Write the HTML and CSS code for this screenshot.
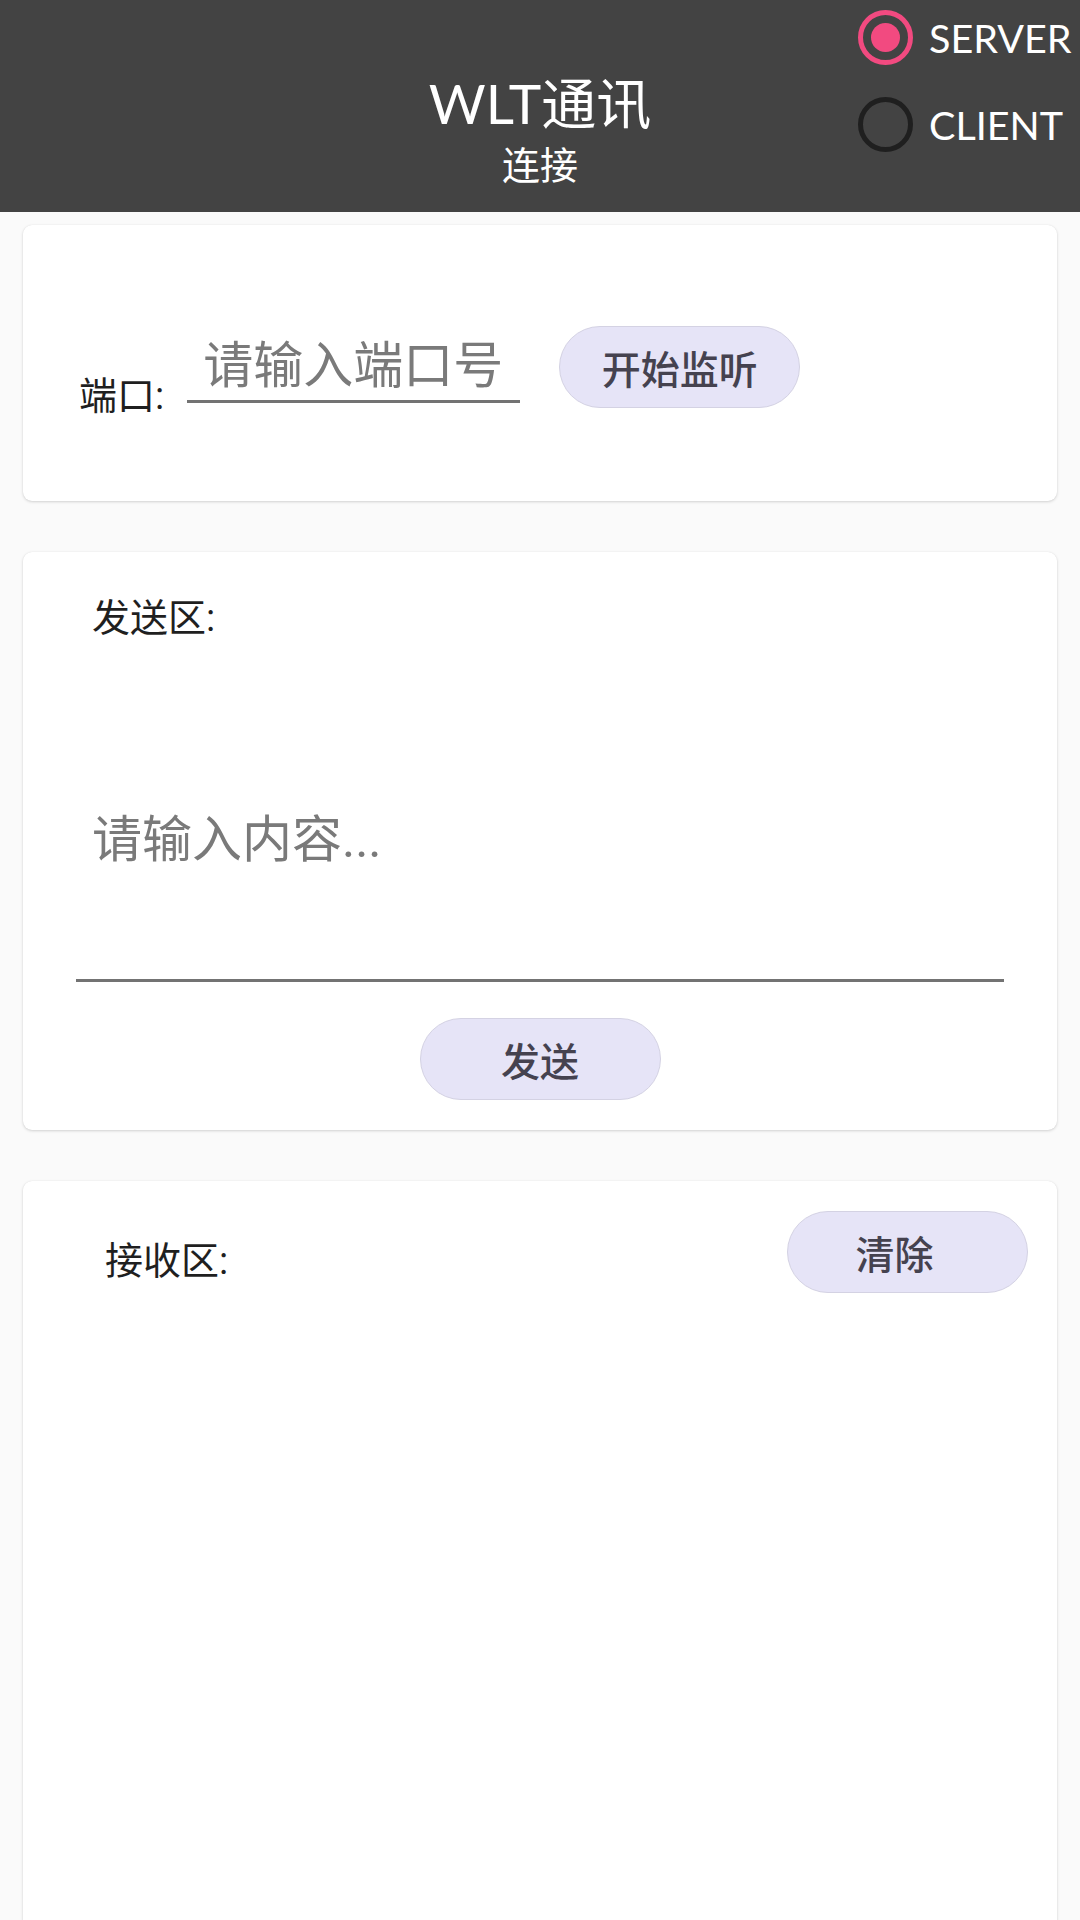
FILE: index.html
```html
<!DOCTYPE html>
<html lang="zh-CN">
<head>
  <meta charset="UTF-8" />
  <title>WLT通讯</title>
  <link rel="stylesheet" href="styles.css">
</head>
<body>

<div class="toolbar">
  <div class="title-block">
    <div class="title">WLT通讯</div>
    <div class="subtitle">连接</div>
  </div>
  <div class="mode-group">
    <label class="mode-item">
      <span class="radio checked"></span>
      <span class="mode-text">SERVER</span>
    </label>
    <label class="mode-item">
      <span class="radio"></span>
      <span class="mode-text">CLIENT</span>
    </label>
  </div>
</div>

<div class="content">
  <div class="card port-card">
    <span class="label port-label">端口:</span>
    <input class="port-input" type="text" placeholder="请输入端口号">
    <button class="pill-btn listen-btn">开始监听</button>
  </div>

  <div class="card send-card">
    <div class="label send-label">发送区:</div>
    <input class="send-input" type="text" placeholder="请输入内容...">
    <button class="pill-btn send-btn">发送</button>
  </div>

  <div class="card recv-card">
    <div class="recv-head">
      <span class="label recv-label">接收区:</span>
      <button class="pill-btn clear-btn">清除</button>
    </div>
  </div>
</div>

</body>
</html>
```

FILE: styles.css
```css
body {
  margin: 0;
  background-color: #fafafa;
  font-family: 'Roboto', 'Noto Sans CJK SC', sans-serif;
  color: #1f1f1f;
  overflow: hidden;
}

.toolbar {
  height: 212px;
  background-color: #434343;
  display: grid;
  grid-template-columns: 1fr auto 1fr;
  overflow: hidden;
}

.title-block {
  grid-column: 2;
  padding-top: 71px;
  text-align: center;
  color: #fff;
  font-family: 'Lato', 'Noto Sans CJK SC', sans-serif;
}

.title {
  font-size: 55px;
  line-height: 64px;
}

.subtitle {
  font-size: 38px;
  line-height: 59px;
}

.mode-group {
  grid-column: 3;
  justify-self: end;
  width: 222px;
  display: flex;
  flex-direction: column;
  gap: 12px;
}

.mode-item {
  height: 75px;
  display: flex;
  align-items: center;
  white-space: nowrap;
}

.radio {
  flex: none;
  width: 55px;
  height: 55px;
  box-sizing: border-box;
  border: 5px solid #1f1f1f;
  border-radius: 50%;
  display: flex;
  align-items: center;
  justify-content: center;
}

.radio.checked {
  border-color: #f24a80;
}

.radio.checked::after {
  content: "";
  width: 29px;
  height: 29px;
  border-radius: 50%;
  background-color: #f24a80;
}

.mode-text {
  margin-left: 16px;
  color: #fff;
  font-family: 'Lato', sans-serif;
  font-size: 39.5px;
}

.content {
  padding: 13px 23px 0;
  display: flex;
  flex-direction: column;
  gap: 51px;
}

.card {
  background: #fff;
  border-radius: 9px;
  box-shadow: 0 1px 3px rgba(0, 0, 0, 0.16), 0 0 1px rgba(0, 0, 0, 0.08);
  box-sizing: border-box;
}

.label {
  font-size: 38px;
  line-height: 44px;
  color: #1f1f1f;
}

input {
  font-family: 'Roboto', 'Noto Sans CJK SC', sans-serif;
  border: none;
  border-bottom: 3px solid #737373;
  outline: none;
  background: transparent;
  box-sizing: border-box;
  color: #1f1f1f;
}

input::placeholder {
  color: #7a7a7a;
}

.pill-btn {
  width: 241px;
  height: 82px;
  border-radius: 41px;
  border: 1px solid #d4d2e3;
  background-color: #e6e4f7;
  color: #45424f;
  font-family: 'Noto Sans CJK SC', sans-serif;
  font-size: 39px;
  font-weight: 500;
  padding: 0;
  cursor: pointer;
}

/* port card */
.port-card {
  height: 276px;
  display: flex;
  align-items: flex-start;
  padding: 101px 0 0 56px;
}

.port-label {
  margin-top: 48px;
}

.port-input {
  width: 333px;
  height: 77px;
  margin-left: 23px;
  padding: 6px 0 0 16px;
  font-size: 50px;
}

.listen-btn {
  margin-left: 39px;
}

/* send card */
.send-card {
  display: flex;
  flex-direction: column;
  padding: 44px 53px 30px;
}

.send-label {
  margin-left: 16px;
}

.send-input {
  width: 100%;
  height: 289px;
  margin-top: 53px;
  padding: 7px 0 0 16px;
  font-size: 50px;
}

.send-btn {
  align-self: center;
  margin-top: 36px;
}

/* receive card */
.recv-card {
  min-height: 780px;
  padding: 30px 29px 0 82px;
}

.recv-head {
  display: flex;
  justify-content: space-between;
  align-items: flex-start;
}

.recv-label {
  margin-top: 28px;
}

.clear-btn {
  padding-right: 26px;
}
```
